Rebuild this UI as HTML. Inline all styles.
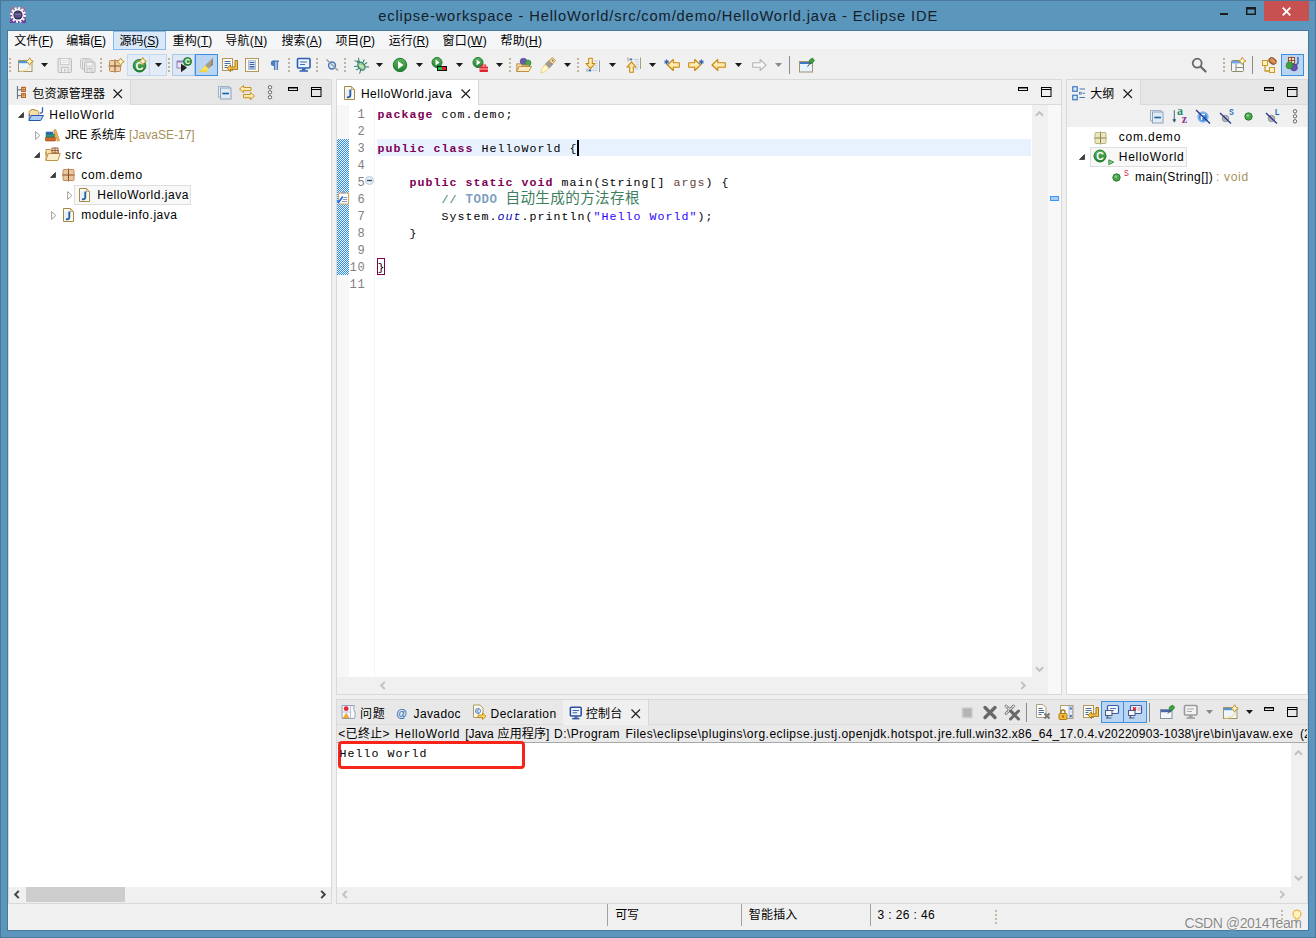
<!DOCTYPE html>
<html lang="zh-CN"><head><meta charset="utf-8"><title>eclipse-workspace - HelloWorld/src/com/demo/HelloWorld.java - Eclipse IDE</title>
<style>
html,body{margin:0;padding:0}
body{width:1316px;height:938px;position:relative;overflow:hidden;background:#5b96bc;font-family:"Liberation Sans","Noto Sans CJK SC",sans-serif;font-size:12px}
div,span.t,svg{position:absolute}
span.t{white-space:pre;line-height:20px;height:20px}
svg{overflow:visible}
u{text-decoration:underline;text-underline-offset:1px}
.k{color:#7f0055;font-weight:bold}.s{color:#2a00ff}.f{color:#0000c0;font-style:italic}.c{color:#3f7f5f}.p{color:#6a3e3e}
.q{color:#a08a55}
</style></head><body>
<svg style="left:0;top:0" width="0" height="0"><defs><linearGradient id="gy" x1="0" y1="0" x2="0" y2="1"><stop offset="0" stop-color="#fffbe6"/><stop offset="1" stop-color="#fbd977"/></linearGradient><linearGradient id="gg" x1="0" y1="0" x2="0" y2="1"><stop offset="0" stop-color="#5fb65f"/><stop offset="1" stop-color="#1f7f2f"/></linearGradient><linearGradient id="gp" x1="0" y1="0" x2="0" y2="1"><stop offset="0" stop-color="#8f83a8"/><stop offset="1" stop-color="#6a3fa2"/></linearGradient></defs></svg>
<div style="left:0px;top:0px;width:1316px;height:938px;box-sizing:border-box;border:1px solid #48799c;"></div>
<div style="left:7px;top:30px;width:1302px;height:901px;background:#48799c;"></div>
<div style="left:8px;top:31px;width:1300px;height:899px;background:#f0f0f0;"></div>
<svg style="left:10px;top:7px" width="16" height="16" viewBox="0 0 16 16"><rect width="16" height="16" fill="url(#gp)"/><circle cx="8" cy="8" r="6.700" fill="none" stroke="#fff" stroke-width="2.400" stroke-dasharray="1.900 1.608"/><circle cx="8" cy="8" r="5.900" fill="#fff"/><circle cx="8" cy="8" r="4.600" fill="#1d1838"/><circle cx="8" cy="8" r="3.700" fill="#4b3f78"/><rect x="4.600" y="6.800" width="6.800" height="1" fill="#8f86b8"/><rect x="4.400" y="8.600" width="7.200" height=".9" fill="#6a5fa0"/></svg>
<div style="left:1264px;top:1px;width:45px;height:20px;background:#c75050;"></div>
<svg style="left:1282.200px;top:6.700px" width="9" height="9"><path d="M.700 .700l7.600 7.600M8.300 .700L.700 8.300" stroke="#fff" stroke-width="1.900"/></svg>
<svg style="left:1246px;top:7px" width="10" height="8"><rect x=".75" y="1.250" width="8.500" height="6" fill="none" stroke="#1c1c1c" stroke-width="1.500"/><rect width="10" height="2.500" fill="#1c1c1c"/></svg>
<div style="left:1220px;top:12.7px;width:8px;height:2.5px;background:#1c1c1c;"></div>
<div style="left:8px;top:31px;width:1300px;height:18px;background:#f5f6f8;"></div>
<div style="left:113px;top:31px;width:53px;height:19px;background:#d9e8f8;box-sizing:border-box;border:1px solid #86b9ec;"></div>
<div style="left:9px;top:58px;width:2px;height:2px;background:#bdb3a2;"></div>
<div style="left:9px;top:62px;width:2px;height:2px;background:#bdb3a2;"></div>
<div style="left:9px;top:66px;width:2px;height:2px;background:#bdb3a2;"></div>
<div style="left:9px;top:70px;width:2px;height:2px;background:#bdb3a2;"></div>
<svg style="left:17px;top:57px" width="16" height="16" viewBox="0 0 16 16"><rect x="1.500" y="3.500" width="13.500" height="11" fill="#eef5fd" stroke="#a79263"/><rect x="2" y="4" width="12.500" height="2.200" fill="#4b96dc"/><path d="M3 14c6 0 9.500-2.500 10.500-7" fill="none" stroke="#f7e4a4" stroke-width="1.300"/><path d="M12.6 0.7l1.3 2.4 2.4 1.3-2.4 1.3-1.3 2.4-1.3-2.4-2.4-1.3 2.4-1.3z" fill="#fff6cc" stroke="#c39a35" stroke-width="1" stroke-linejoin="round"/></svg>
<svg style="left:41px;top:63px" width="7" height="4" viewBox="0 0 7 4"><path d="M0 0h7L3.5 4z" fill="#1a1a1a"/></svg>
<svg style="left:57px;top:57px" width="16" height="16" viewBox="0 0 16 16"><path d="M1 2.500a1 1 0 0 1 1-1h11.500a1 1 0 0 1 1 1v12a1 1 0 0 1-1 1H2a1 1 0 0 1-1-1z" fill="#e6e6e6" stroke="#bcbcbc"/><rect x="3.500" y="1.500" width="8.500" height="6" fill="#f6f6f6" stroke="#c8c8c8" stroke-width=".8"/><path d="M5 3.500h5.500M5 5.500h5.500" stroke="#dadada" stroke-width=".8"/><rect x="4.500" y="10.500" width="6.500" height="5" fill="#efefef" stroke="#bcbcbc" stroke-width=".8"/><rect x="7" y="12" width="1.500" height="2.500" fill="#c4c4c4"/></svg>
<svg style="left:80px;top:57px" width="16" height="16" viewBox="0 0 16 16"><rect x=".500" y="1.500" width="10" height="10" rx="1" fill="#ececec" stroke="#c6c6c6"/><rect x="2.500" y="3" width="10" height="10" rx="1" fill="#ececec" stroke="#c2c2c2"/><rect x="4.500" y="5" width="10.500" height="10.500" rx="1" fill="#e6e6e6" stroke="#bcbcbc"/><rect x="6.500" y="5.500" width="6" height="3.500" fill="#f6f6f6" stroke="#cacaca" stroke-width=".8"/><rect x="7" y="11.500" width="5" height="4" fill="#efefef" stroke="#bcbcbc" stroke-width=".8"/><rect x="9" y="12.500" width="1.300" height="2" fill="#c4c4c4"/></svg>
<div style="left:100px;top:58px;width:2px;height:2px;background:#bdb3a2;"></div>
<div style="left:100px;top:62px;width:2px;height:2px;background:#bdb3a2;"></div>
<div style="left:100px;top:66px;width:2px;height:2px;background:#bdb3a2;"></div>
<div style="left:100px;top:70px;width:2px;height:2px;background:#bdb3a2;"></div>
<svg style="left:108px;top:57px" width="16" height="16" viewBox="0 0 16 16"><rect x="1.5" y="3.5" width="11" height="11" rx="1" fill="#ecd2a4"/><path d="M7.0 2.5v13M0.5 9.0h13" stroke="#8c4a2a" stroke-width="1"/><rect x="1.5" y="3.5" width="11" height="11" rx="1" fill="none" stroke="#c08a5a" stroke-width="1"/><path d="M12.6 1l1.3 2.4 2.4 1.3-2.4 1.3-1.3 2.4-1.3-2.4-2.4-1.3 2.4-1.3z" fill="#fff6cc" stroke="#c39a35" stroke-width="1" stroke-linejoin="round"/></svg>
<div style="left:127px;top:54px;width:40px;height:22px;background:#e3ecf6;box-sizing:border-box;border:1px solid #c4d8ee;"></div>
<div style="left:149px;top:55px;width:1px;height:20px;background:#c4d8ee;"></div>
<svg style="left:131px;top:57px" width="16" height="16" viewBox="0 0 16 16"><circle cx="8.5" cy="8.7" r="6.3" fill="url(#gg)" stroke="#1f7a2a" stroke-width="1"/><text x="8.5" y="12.67" font-family="Liberation Sans,sans-serif" font-weight="bold" font-size="11.03" fill="#fff" text-anchor="middle">C</text><path d="M11.8 0.5l1.3 2.4 2.4 1.3-2.4 1.3-1.3 2.4-1.3-2.4-2.4-1.3 2.4-1.3z" fill="#fff6cc" stroke="#c39a35" stroke-width="1" stroke-linejoin="round"/></svg>
<svg style="left:155px;top:63px" width="7" height="4" viewBox="0 0 7 4"><path d="M0 0h7L3.5 4z" fill="#1a1a1a"/></svg>
<div style="left:168px;top:58px;width:2px;height:2px;background:#bdb3a2;"></div>
<div style="left:168px;top:62px;width:2px;height:2px;background:#bdb3a2;"></div>
<div style="left:168px;top:66px;width:2px;height:2px;background:#bdb3a2;"></div>
<div style="left:168px;top:70px;width:2px;height:2px;background:#bdb3a2;"></div>
<div style="left:172px;top:54px;width:23px;height:22px;background:#dde8f4;box-sizing:border-box;border:1px solid #a9c8ea;"></div>
<svg style="left:176px;top:57px" width="16" height="16" viewBox="0 0 16 16"><rect x="1" y="4.500" width="8" height="6.500" fill="#e9e4f3" stroke="#8d7fb3"/><rect x="1" y="3.500" width="8" height="2" fill="#8d7fb3"/><path d="M5 6.500l6 4.200-6 4.500z" fill="#222"/><circle cx="11.5" cy="4.5" r="4" fill="url(#gg)" stroke="#1f7a2a" stroke-width="1"/><text x="11.5" y="7.02" font-family="Liberation Sans,sans-serif" font-weight="bold" font-size="7.0" fill="#fff" text-anchor="middle">C</text></svg>
<div style="left:195px;top:54px;width:23px;height:22px;background:#b9d5f1;box-sizing:border-box;border:1px solid #3b8ee0;"></div>
<svg style="left:198px;top:57px" width="16" height="16" viewBox="0 0 16 16"><path d="M14.800 .800L7 8.500l3.500 3.300 4.300-4z" fill="#a59d88"/><path d="M14.800 .800l-2.300 8.900 2.300-2z" fill="#857d6c"/><path d="M7 8.500l3.500 3.300-2.300 2.400H4.500l-.5-2.200z" fill="#fbe24f"/><path d="M1.500 14.300h7.500" stroke="#f3d22e" stroke-width="1.500"/></svg>
<svg style="left:221px;top:57px" width="16" height="16" viewBox="0 0 16 16"><rect x="1.5" y="1.5" width="10" height="12" fill="#fdfbf2" stroke="#b09a62"/><path d="M3.5 4.5h6M3.5 6.5h6M3.5 8.5h3M3.5 10.5h3" stroke="#4a6fa8" stroke-width="1"/><path d="M14 3.5v6.5h-4.5v-2.3l-3.3 3.5 3.3 3.5v-2.3h7V3.5z" fill="#f6c545" stroke="#a06f12" stroke-width=".9" stroke-linejoin="round"/></svg>
<svg style="left:244px;top:57px" width="16" height="16" viewBox="0 0 16 16"><rect x="1.5" y="1.5" width="13" height="13" fill="#fdfbf2" stroke="#b09a62"/><rect x="4.5" y="3.5" width="7" height="9" fill="#dbe6f5" stroke="#5577aa" stroke-width=".8" stroke-dasharray="1 1"/><path d="M5.5 5.5h5M5.5 7.5h5M5.5 9.5h5M5.5 11h5" stroke="#3e67a8" stroke-width="1"/></svg>
<svg style="left:267px;top:57px" width="16" height="16" viewBox="0 0 16 16"><path d="M5.8 4.2h6.2M7.7 4v9M10.3 4v9" stroke="#4a7ec0" stroke-width="1.5" fill="none"/><path d="M7.7 3.5h-1.2a2.7 2.7 0 0 0 0 5.4h1.2z" fill="#4a7ec0"/></svg>
<div style="left:288px;top:58px;width:2px;height:2px;background:#bdb3a2;"></div>
<div style="left:288px;top:62px;width:2px;height:2px;background:#bdb3a2;"></div>
<div style="left:288px;top:66px;width:2px;height:2px;background:#bdb3a2;"></div>
<div style="left:288px;top:70px;width:2px;height:2px;background:#bdb3a2;"></div>
<svg style="left:296px;top:57px" width="16" height="16" viewBox="0 0 16 16"><rect x="1.5" y="1.5" width="12.5" height="9.5" rx="1" fill="#eef4fc" stroke="#2d5fae" stroke-width="1.6"/><path d="M4 5h7M4 7.5h5" stroke="#3a6cb8" stroke-width="1.1"/><path d="M6 11.5h3.5v2h-3.5z" fill="#2d5fae"/><path d="M3.5 14h8.5" stroke="#2d5fae" stroke-width="1.5"/></svg>
<div style="left:316px;top:58px;width:2px;height:2px;background:#bdb3a2;"></div>
<div style="left:316px;top:62px;width:2px;height:2px;background:#bdb3a2;"></div>
<div style="left:316px;top:66px;width:2px;height:2px;background:#bdb3a2;"></div>
<div style="left:316px;top:70px;width:2px;height:2px;background:#bdb3a2;"></div>
<svg style="left:325px;top:57px" width="16" height="16" viewBox="0 0 16 16"><circle cx="7" cy="8.5" r="3.4" fill="#dfeaf7" stroke="#3f78bd" stroke-width="1.5"/><path d="M1.5 2.5l11.5 11" stroke="#9a9a9a" stroke-width="1.4"/></svg>
<div style="left:344px;top:58px;width:2px;height:2px;background:#bdb3a2;"></div>
<div style="left:344px;top:62px;width:2px;height:2px;background:#bdb3a2;"></div>
<div style="left:344px;top:66px;width:2px;height:2px;background:#bdb3a2;"></div>
<div style="left:344px;top:70px;width:2px;height:2px;background:#bdb3a2;"></div>
<svg style="left:353px;top:57px" width="16" height="16" viewBox="0 0 16 16"><g transform="rotate(-35 8 8.500)"><ellipse cx="8" cy="9.300" rx="3" ry="4.300" fill="#a9d08a" stroke="#2a7f8c" stroke-width="1.100"/><circle cx="8" cy="4" r="1.700" fill="#3f8f7a"/><path d="M5 7.300L1.800 5.500M4.900 9.500H1.300M5.200 12l-3 2.300M11 7.300l3.200-1.800M11.100 9.500h3.600M10.800 12l3 2.300M6.800 2.700L5.500 .8M9.200 2.700L10.500 .8" stroke="#2f7f6a" stroke-width="1" fill="none"/><path d="M6.700 7.500l2.600 4" stroke="#e6f4da" stroke-width=".9"/></g></svg>
<svg style="left:376px;top:63px" width="7" height="4" viewBox="0 0 7 4"><path d="M0 0h7L3.5 4z" fill="#1a1a1a"/></svg>
<svg style="left:392px;top:57px" width="16" height="16" viewBox="0 0 16 16"><circle cx="8" cy="8" r="6.7" fill="url(#gg)" stroke="#1c7a30" stroke-width="1"/><path d="M6.057 3.9800000000000004L11.484 8L6.057 12.02z" fill="#fff"/></svg>
<svg style="left:416px;top:63px" width="7" height="4" viewBox="0 0 7 4"><path d="M0 0h7L3.5 4z" fill="#1a1a1a"/></svg>
<svg style="left:431px;top:57px" width="16" height="16" viewBox="0 0 16 16"><circle cx="6" cy="5.5" r="5" fill="url(#gg)" stroke="#1c7a30" stroke-width="1"/><path d="M4.55 2.5L8.6 5.5L4.55 8.5z" fill="#fff"/><rect x="6" y="9" width="10" height="5" fill="#111"/><rect x="7" y="10" width="4" height="3" fill="#1fc040"/><rect x="11" y="10" width="4" height="3" fill="#e8242b"/></svg>
<svg style="left:456px;top:63px" width="7" height="4" viewBox="0 0 7 4"><path d="M0 0h7L3.5 4z" fill="#1a1a1a"/></svg>
<svg style="left:472px;top:57px" width="16" height="16" viewBox="0 0 16 16"><circle cx="6" cy="5.5" r="5" fill="url(#gg)" stroke="#1c7a30" stroke-width="1"/><path d="M4.55 2.5L8.6 5.5L4.55 8.5z" fill="#fff"/><rect x="7.500" y="9.500" width="8.500" height="5.500" rx=".8" fill="#e0262c"/><path d="M10 9.500v-1.500h3.500v1.500" fill="none" stroke="#e0262c" stroke-width="1.200"/><path d="M7.500 12h8.500" stroke="#fbd3d3" stroke-width=".9"/></svg>
<svg style="left:496px;top:63px" width="7" height="4" viewBox="0 0 7 4"><path d="M0 0h7L3.5 4z" fill="#1a1a1a"/></svg>
<div style="left:509px;top:58px;width:2px;height:2px;background:#bdb3a2;"></div>
<div style="left:509px;top:62px;width:2px;height:2px;background:#bdb3a2;"></div>
<div style="left:509px;top:66px;width:2px;height:2px;background:#bdb3a2;"></div>
<div style="left:509px;top:70px;width:2px;height:2px;background:#bdb3a2;"></div>
<svg style="left:516px;top:57px" width="16" height="16" viewBox="0 0 16 16"><circle cx="7.5" cy="4.500" r="3.300" fill="#6b58b0" stroke="#4a3a8a" stroke-width=".6"/><circle cx="12" cy="6" r="3" fill="#4fa54f" stroke="#2d7a35" stroke-width=".6"/><path d="M.8 6.800h4l1.200 1.400h6.500v6.300H.8z" fill="#f4d9a0" stroke="#b98a3a" stroke-width=".9"/><path d="M.8 14.500l2.200-5h12.500l-2.700 5z" fill="#fbe9c0" stroke="#b98a3a" stroke-width=".9" stroke-linejoin="round"/></svg>
<svg style="left:540px;top:57px" width="16" height="16" viewBox="0 0 16 16"><path d="M8.500 4l4-3.500 3 3-3.500 4z" fill="#f4d28a" stroke="#b98a3a" stroke-width=".8"/><circle cx="12.600" cy="3.500" r=".8" fill="#3f5f9f"/><path d="M5 7.500l3.500-3.500 4 3.500-3.500 3.700z" fill="#a09c98" stroke="#76726c" stroke-width=".6"/><path d="M5 7.500l4 3.700L4 15l-3.300.8 1-3.300z" fill="#fff8d0" stroke="#e8cc6a" stroke-width=".8"/></svg>
<svg style="left:564px;top:63px" width="7" height="4" viewBox="0 0 7 4"><path d="M0 0h7L3.5 4z" fill="#1a1a1a"/></svg>
<div style="left:577px;top:58px;width:2px;height:2px;background:#bdb3a2;"></div>
<div style="left:577px;top:62px;width:2px;height:2px;background:#bdb3a2;"></div>
<div style="left:577px;top:66px;width:2px;height:2px;background:#bdb3a2;"></div>
<div style="left:577px;top:70px;width:2px;height:2px;background:#bdb3a2;"></div>
<svg style="left:585px;top:57px" width="16" height="16" viewBox="0 0 16 16"><path d="M3.7 1.2h3.600v5.300h2.700l-4.500 5.200-4.500-5.200h2.700z" fill="url(#gy)" stroke="#c8860c" stroke-width="1.100" stroke-linejoin="round"/><path d="M14.500 3.500v11.500M2 11.500v3.500" stroke="#8f9fb0" stroke-width="1"/><path d="M9 4h3.500M10.500 6.300h2M10 8.600h2.500M8 10.900h1.500M10.500 10.900h2M7 13.300h5.500" stroke="#b4c3e0" stroke-width=".9"/><rect x="3.500" y="12.500" width="2.700" height="1.800" fill="#2f5fa8"/></svg>
<svg style="left:609px;top:63px" width="7" height="4" viewBox="0 0 7 4"><path d="M0 0h7L3.5 4z" fill="#1a1a1a"/></svg>
<svg style="left:626px;top:57px" width="16" height="16" viewBox="0 0 16 16"><g transform="translate(0 16.500) scale(1 -1)"><path d="M3.7 1.2h3.600v5.300h2.700l-4.500 5.200-4.500-5.200h2.700z" fill="url(#gy)" stroke="#c8860c" stroke-width="1.100" stroke-linejoin="round"/></g><path d="M14.500 .500v11.500M2 .500v4" stroke="#a8a070" stroke-width="1"/><path d="M8 2.700h4.500M9 5h1.500M11.500 5h1.500M10.500 7.300h2M10.500 9.600h2M9 11.900h3.500" stroke="#b4c3e0" stroke-width=".9"/><rect x="3.500" y="1.500" width="2.700" height="1.800" fill="#4f6fb8"/></svg>
<svg style="left:649px;top:63px" width="7" height="4" viewBox="0 0 7 4"><path d="M0 0h7L3.5 4z" fill="#1a1a1a"/></svg>
<svg style="left:664px;top:57px" width="16" height="16" viewBox="0 0 16 16"><path d="M3.5 8l5.800-5.500v3.200h6v4.600h-6v3.200z" fill="url(#gy)" stroke="#c8860c" stroke-width="1.100" stroke-linejoin="round"/><path d="M2.6 2.500v5M0.5 3.700l4.200 2.600M0.5 6.300l4.200-2.600" stroke="#2f5fa8" stroke-width="1.100"/></svg>
<svg style="left:688px;top:57px" width="16" height="16" viewBox="0 0 16 16"><g transform="translate(16 0) scale(-1 1)"><path d="M3.5 8l5.800-5.500v3.200h6v4.600h-6v3.200z" fill="url(#gy)" stroke="#c8860c" stroke-width="1.100" stroke-linejoin="round"/></g><path d="M13.4 2.500v5M11.3 3.700l4.200 2.600M11.3 6.300l4.200-2.600" stroke="#2f5fa8" stroke-width="1.100"/></svg>
<svg style="left:711px;top:57px" width="16" height="16" viewBox="0 0 16 16"><path d="M1 8l5.800-5.500v3.200h7.5v4.600h-7.5v3.200z" fill="url(#gy)" stroke="#c8860c" stroke-width="1.100" stroke-linejoin="round"/></svg>
<svg style="left:735px;top:63px" width="7" height="4" viewBox="0 0 7 4"><path d="M0 0h7L3.5 4z" fill="#1a1a1a"/></svg>
<svg style="left:751px;top:57px" width="16" height="16" viewBox="0 0 16 16"><g transform="translate(16 0) scale(-1 1)"><path d="M1 8l5.800-5.500v3.200h7.5v4.600h-7.5v3.200z" fill="#f6f6f6" stroke="#b4b4b4" stroke-width="1.100" stroke-linejoin="round"/></g></svg>
<svg style="left:775px;top:63px" width="7" height="4" viewBox="0 0 7 4"><path d="M0 0h7L3.5 4z" fill="#8a8a8a"/></svg>
<div style="left:789px;top:56px;width:1px;height:18px;background:#8a8a8a;"></div>
<svg style="left:798px;top:57px" width="16" height="16" viewBox="0 0 16 16"><rect x="1.500" y="4.500" width="13" height="10.500" fill="#e6f2fc" stroke="#a09468"/><rect x="2" y="5" width="12" height="2" fill="#3f78bd"/><path d="M9.500 9.500l3-3.500" stroke="#444" stroke-width="1"/><path d="M11.500 3l2.800-2 2.200 2.200-2 2.800-2.200.3-1.200-1.200z" fill="#3da13d" stroke="#1f7a2a" stroke-width=".7"/></svg>
<svg style="left:1191px;top:57.3px" width="16" height="16" viewBox="0 0 16.800 16.800"><circle cx="6.500" cy="6.500" r="4.700" fill="none" stroke="#686868" stroke-width="1.900"/><path d="M10 10l5.300 5.300" stroke="#686868" stroke-width="2.300" stroke-linecap="round"/></svg>
<div style="left:1223px;top:58px;width:2px;height:2px;background:#bdb3a2;"></div>
<div style="left:1223px;top:62px;width:2px;height:2px;background:#bdb3a2;"></div>
<div style="left:1223px;top:66px;width:2px;height:2px;background:#bdb3a2;"></div>
<div style="left:1223px;top:70px;width:2px;height:2px;background:#bdb3a2;"></div>
<svg style="left:1230px;top:57px" width="16" height="16" viewBox="0 0 16 16"><rect x="1.500" y="3.500" width="12" height="11" rx="1" fill="#f3f7fc" stroke="#8f8a6a"/><rect x="2" y="4" width="11" height="2.400" fill="#6aa6e6"/><path d="M6 6.500v8M6 10.500h7.500" stroke="#8f8a6a" stroke-width="1"/><path d="M12.3 0.2l1.3 2.4 2.4 1.3-2.4 1.3-1.3 2.4-1.3-2.4-2.4-1.3 2.4-1.3z" fill="#fff6cc" stroke="#c39a35" stroke-width="1" stroke-linejoin="round"/></svg>
<div style="left:1252px;top:56px;width:1px;height:18px;background:#8a8a8a;"></div>
<svg style="left:1261px;top:57px" width="16" height="16" viewBox="0 0 16 16"><path d="M4 7v7h6" fill="none" stroke="#c89a2a" stroke-width="1.300"/><rect x="1.500" y="3.500" width="5" height="5" fill="#fff3b8" stroke="#c89a2a"/><rect x="8.500" y="10.500" width="5" height="5" fill="#fff3b8" stroke="#c89a2a"/><ellipse cx="11.500" cy="4" rx="4" ry="3" transform="rotate(35 11.500 4)" fill="#c4763a" stroke="#7a3f18" stroke-width=".8"/><path d="M9 2.500l5 3.500M10.500 1.200l4 4.500" stroke="#f1c79a" stroke-width=".7"/></svg>
<div style="left:1281px;top:54px;width:23px;height:22px;background:#b9d5f1;box-sizing:border-box;border:1px solid #3b8ee0;"></div>
<svg style="left:1284px;top:56px" width="16" height="16" viewBox="0 0 16 16"><rect x="4.500" y="1.500" width="6" height="6" fill="#f1d9b8" stroke="#8c4a2a" stroke-width=".9"/><path d="M7.500 .800v7.400M3.800 4.500h7.400" stroke="#8c4a2a" stroke-width=".9"/><path d="M14 1v5.500c0 1.500-1 2-2.500 2" fill="none" stroke="#3f6fb0" stroke-width="1.500"/><circle cx="10" cy="11.500" r="3.400" fill="#6b4fb0" stroke="#45308a" stroke-width=".6"/><circle cx="5.500" cy="9.500" r="3.400" fill="#3ea13e" stroke="#1c7a28" stroke-width=".6"/></svg>
<div style="left:8px;top:79px;width:324px;height:825px;background:#fff;box-sizing:border-box;border:1px solid #d9d9d9;"></div>
<div style="left:9px;top:80px;width:322px;height:25px;background:#e6e6e6;box-sizing:border-box;border-bottom:1px solid #dadada;"></div>
<div style="left:9px;top:80px;width:122px;height:25px;background:#f0f0f0;box-sizing:border-box;border-right:1px solid #d8d8d8;"></div>
<svg style="left:16px;top:86px" width="16" height="16" viewBox="0 0 16 16"><path d="M1.400 0v13M1.400 3.800h3.600M1.400 9.700h3.600" stroke="#5a6a84" stroke-width="1" fill="none"/><rect x="5" y=".800" width="5" height="5.100" rx=".5" fill="#b8682a"/><rect x="5" y="7" width="5" height="5.100" rx=".5" fill="#b8682a"/><path d="M6.200 2.500h1.100M7.800 2.500h1.100M6.200 4.200h1.100M7.800 4.200h1.100M6.200 8.700h1.100M7.800 8.700h1.100M6.200 10.400h1.100M7.800 10.400h1.100" stroke="#f2cc98" stroke-width="1.100"/></svg>
<svg style="left:113px;top:89px" width="10" height="10" viewBox="0 0 10 10"><path d="M.5 .5l8.500 8.500M9 .5L.5 9" stroke="#1a1a1a" stroke-width="1.100" fill="none"/></svg>
<svg style="left:218px;top:85px" width="16" height="16" viewBox="0 0 16 16"><rect x=".500" y="1.500" width="10.500" height="10.500" fill="#e8f0f4" stroke="#9fb0c8"/><rect x="2.500" y="3" width="10.500" height="11" fill="#dcecf0" stroke="#8fa0c0"/><path d="M4.300 8.500h6.700" stroke="#1f5fa8" stroke-width="1.600"/></svg>
<svg style="left:239px;top:85px" width="16" height="16" viewBox="0 0 16 16"><path d="M.600 4l4-3.500v2h7.400v3.200H4.600v2z" fill="url(#gy)" stroke="#c8901c" stroke-width="1" stroke-linejoin="round"/><path d="M15.400 11l-4-3.500v2H4.500v3.200h6.900v2z" fill="url(#gy)" stroke="#c8901c" stroke-width="1" stroke-linejoin="round"/></svg>
<svg style="left:267px;top:85px" width="6" height="15" viewBox="0 0 6 15"><circle cx="3" cy="2.300" r="1.700" fill="#fff" stroke="#555" stroke-width=".9"/><circle cx="3" cy="7.300" r="1.700" fill="#fff" stroke="#555" stroke-width=".9"/><circle cx="3" cy="12.300" r="1.700" fill="#fff" stroke="#555" stroke-width=".9"/></svg>
<svg style="left:288px;top:87px" width="11" height="5" viewBox="0 0 11 5"><rect x=".500" y=".500" width="9" height="3" fill="none" stroke="#000" stroke-width="1"/><path d="M.500 1h9" stroke="#000" stroke-width="1"/></svg>
<svg style="left:311px;top:87px" width="11" height="11" viewBox="0 0 11 11"><rect x=".500" y=".500" width="9.500" height="9" fill="none" stroke="#000" stroke-width="1"/><path d="M.500 2.500h9.500" stroke="#000" stroke-width="1"/></svg>
<svg style="left:18px;top:111.5px" width="7" height="7" viewBox="0 0 7 7"><path d="M5.500 .500v5H.500z" fill="#404040" stroke="#262626" stroke-width=".7" stroke-linejoin="round"/></svg>
<svg style="left:28px;top:106px" width="16" height="16" viewBox="0 0 16 16"><path d="M1.200 5.500a1 1 0 0 1 1-1h1.300v-1h3.500v1h2.500l1.200 1.300v3.700h-9.500z" fill="#f4dfa4" stroke="#b98a3a" stroke-width=".9"/><path d="M.800 14.500l2.700-5h12l-2.800 5z" fill="#a9cdf4" stroke="#2a56b0" stroke-width="1" stroke-linejoin="round"/><path d="M1.200 8v6" stroke="#2a56b0" stroke-width=".9"/><path d="M14.500 1.300v4c0 1.400-.9 2-2.700 1.700" fill="none" stroke="#2d5fae" stroke-width="1.300"/></svg>
<svg style="left:35px;top:131px" width="6" height="10" viewBox="0 0 6 10"><path d="M.600 .600l4.300 3.900-4.300 3.900z" fill="#fff" stroke="#a0a0a0" stroke-width="1" stroke-linejoin="round"/></svg>
<svg style="left:45px;top:127px" width="16" height="16" viewBox="0 0 16 16"><rect x=".500" y="10" width="10" height="4" rx=".5" fill="#cc6a2c" stroke="#9a4a18" stroke-width=".6"/><rect x="1" y="7" width="8.500" height="3" rx=".5" fill="#2f9a80" stroke="#1a6a5a" stroke-width=".6"/><rect x="1" y="5" width="7" height="2" rx=".5" fill="#2f6fc0" stroke="#204a90" stroke-width=".5"/><path d="M8.600 3.300l2.100-.7 3.900 10.900-2.200.7z" fill="#f0b44a" stroke="#c07a20" stroke-width=".6"/></svg>
<svg style="left:34px;top:151.8px" width="7" height="7" viewBox="0 0 7 7"><path d="M5.500 .500v5H.500z" fill="#404040" stroke="#262626" stroke-width=".7" stroke-linejoin="round"/></svg>
<svg style="left:45px;top:146px" width="16" height="16" viewBox="0 0 16 16"><path d="M1 3.500h4.500l1.200 1.500h6.800v4H1z" fill="#f6e2a8" stroke="#b98a3a" stroke-width=".9"/><path d="M.8 14.500l2.500-7h12l-2.500 7z" fill="#fbeec8" stroke="#b98a3a" stroke-width=".9" stroke-linejoin="round"/><path d="M1 6v8" stroke="#b98a3a" stroke-width=".9"/><rect x="7" y="2" width="6" height="5" fill="#f1d9b8" stroke="#8c4a2a" stroke-width=".8"/><path d="M10 1.500v6M6.500 4.500h7" stroke="#8c4a2a" stroke-width=".8"/></svg>
<svg style="left:50px;top:171.8px" width="7" height="7" viewBox="0 0 7 7"><path d="M5.500 .500v5H.500z" fill="#404040" stroke="#262626" stroke-width=".7" stroke-linejoin="round"/></svg>
<svg style="left:61px;top:167px" width="16" height="16" viewBox="0 0 16 16"><rect x="2" y="2.5" width="11" height="11" rx="1" fill="#e8c89c"/><path d="M7.5 1.5v13M1 8.0h13" stroke="#8c4a2a" stroke-width="1"/><rect x="2" y="2.5" width="11" height="11" rx="1" fill="none" stroke="#c08a5a" stroke-width="1"/></svg>
<svg style="left:67px;top:191.2px" width="6" height="10" viewBox="0 0 6 10"><path d="M.600 .600l4.300 3.900-4.300 3.900z" fill="#fff" stroke="#a0a0a0" stroke-width="1" stroke-linejoin="round"/></svg>
<div style="left:74px;top:185px;width:117px;height:20px;background:#f8f8f8;box-sizing:border-box;border:1px solid #dedede;"></div>
<svg style="left:77px;top:187px" width="16" height="16" viewBox="0 0 16 16"><path d="M2.500 1.500h7l3 3v10h-10z" fill="#fdfcf4" stroke="#a58a45"/><path d="M9.500 1.500v3h3z" fill="#e8d9a4" stroke="#a58a45" stroke-width=".6"/><rect x="3.300" y="4.500" width="6" height="9" fill="#e6eefa"/><path d="M8.300 4.500v5.800c0 1.600-1 2.300-3.300 1.800" fill="none" stroke="#2a5f9e" stroke-width="1.900"/></svg>
<svg style="left:51px;top:211px" width="6" height="10" viewBox="0 0 6 10"><path d="M.600 .600l4.300 3.900-4.300 3.900z" fill="#fff" stroke="#a0a0a0" stroke-width="1" stroke-linejoin="round"/></svg>
<svg style="left:61px;top:207px" width="16" height="16" viewBox="0 0 16 16"><path d="M2.500 1.500h7l3 3v10h-10z" fill="#fdfcf4" stroke="#a58a45"/><path d="M9.500 1.500v3h3z" fill="#e8d9a4" stroke="#a58a45" stroke-width=".6"/><rect x="3.300" y="4.500" width="6" height="9" fill="#e6eefa"/><path d="M8.300 4.500v5.800c0 1.600-1 2.300-3.300 1.800" fill="none" stroke="#2a5f9e" stroke-width="1.900"/></svg>
<div style="left:9px;top:887px;width:322px;height:16px;background:#f0f0f0;"></div>
<div style="left:26px;top:887px;width:99px;height:15px;background:#cdcdcd;"></div>
<svg style="left:0;top:0" width="1" height="1"><path d="M18.8 890.9L15.2 894.5l3.6 3.6" fill="none" stroke="#444" stroke-width="2"/></svg>
<svg style="left:0;top:0" width="1" height="1"><path d="M321.2 890.9L324.8 894.5l-3.6 3.6" fill="none" stroke="#444" stroke-width="2"/></svg>
<div style="left:336px;top:79px;width:726px;height:616px;background:#fff;box-sizing:border-box;border:1px solid #d9d9d9;"></div>
<div style="left:337px;top:80px;width:724px;height:25px;background:#f0f0f0;box-sizing:border-box;border-bottom:1px solid #dadada;"></div>
<div style="left:337px;top:80px;width:142px;height:25px;background:#fff;box-sizing:border-box;border-right:1px solid #d8d8d8;"></div>
<svg style="left:342px;top:85px" width="16" height="16" viewBox="0 0 16 16"><path d="M2.500 1.500h7l3 3v10h-10z" fill="#fdfcf4" stroke="#a58a45"/><path d="M9.500 1.500v3h3z" fill="#e8d9a4" stroke="#a58a45" stroke-width=".6"/><rect x="3.300" y="4.500" width="6" height="9" fill="#e6eefa"/><path d="M8.300 4.500v5.800c0 1.600-1 2.300-3.300 1.800" fill="none" stroke="#2a5f9e" stroke-width="1.900"/></svg>
<svg style="left:461px;top:89px" width="10" height="10" viewBox="0 0 10 10"><path d="M.5 .5l8.500 8.500M9 .5L.5 9" stroke="#1a1a1a" stroke-width="1.100" fill="none"/></svg>
<svg style="left:1018px;top:87px" width="11" height="5" viewBox="0 0 11 5"><rect x=".500" y=".500" width="9" height="3" fill="none" stroke="#000" stroke-width="1"/><path d="M.500 1h9" stroke="#000" stroke-width="1"/></svg>
<svg style="left:1041px;top:87px" width="11" height="11" viewBox="0 0 11 11"><rect x=".500" y=".500" width="9.500" height="9" fill="none" stroke="#000" stroke-width="1"/><path d="M.500 2.500h9.500" stroke="#000" stroke-width="1"/></svg>
<div style="left:337px;top:105px;width:12px;height:572px;background:#f7f7f7;"></div>
<div style="left:337px;top:139px;width:12px;height:136px;background:repeating-conic-gradient(#2a8cf0 0 25%,#f4f9ff 0 50%) 0 0/2px 2px;"></div>
<div style="left:374px;top:105px;width:1px;height:572px;background:#f6f6f6;"></div>
<div style="left:377px;top:139px;width:654px;height:17px;background:#e8f2fe;"></div>
<div style="left:1032px;top:105px;width:16px;height:572px;background:#f0f0f0;"></div>
<div style="left:1048px;top:105px;width:13px;height:589px;background:#f8f8f8;"></div>
<div style="left:1050px;top:196px;width:9px;height:5px;background:#a9cdf2;box-sizing:border-box;border:1px solid #3399ff;"></div>
<svg style="left:0;top:0" width="1" height="1"><path d="M1035.9 115.8L1039.5 112.2l3.6 3.6" fill="none" stroke="#c2c2c2" stroke-width="2"/></svg>
<svg style="left:0;top:0" width="1" height="1"><path d="M1035.9 667.2L1039.5 670.8l3.6-3.6" fill="none" stroke="#c2c2c2" stroke-width="2"/></svg>
<div style="left:337px;top:677px;width:711px;height:17px;background:#f0f0f0;"></div>
<svg style="left:0;top:0" width="1" height="1"><path d="M384.8 681.9L381.2 685.5l3.6 3.6" fill="none" stroke="#c2c2c2" stroke-width="2"/></svg>
<svg style="left:0;top:0" width="1" height="1"><path d="M1021.2 681.9L1024.8 685.5l-3.6 3.6" fill="none" stroke="#c2c2c2" stroke-width="2"/></svg>
<svg style="left:365px;top:176px" width="9" height="9"><circle cx="4.500" cy="4.500" r="4" fill="#e6edf5" stroke="#b4c3d6" stroke-width=".9"/><path d="M2 4.500h5" stroke="#3a4868" stroke-width="1.300"/></svg>
<svg style="left:337px;top:190px" width="12" height="15" viewBox="0 0 12 15"><rect x="1.500" y="3" width="10" height="11" rx=".8" fill="#fdfdfd" stroke="#c8a868" stroke-width="1.200"/><path d="M3.500 3.500L6.500 .300l3 3.200z" fill="#98a6c6"/><path d="M6.500 7.500h3.500M6 9.500h4M5 11.500h5" stroke="#7a8cb0" stroke-width=".9"/><path d="M.300 10.500l1.500 1.600 4-5.600" fill="none" stroke="#1f6ff0" stroke-width="1.700"/></svg>
<div style="left:377px;top:258px;width:8px;height:17px;box-sizing:border-box;border:1px solid #7f0055;"></div>
<div style="left:577px;top:140px;width:2px;height:16px;background:#000;"></div>
<div style="left:1066px;top:79px;width:242px;height:616px;background:#fff;box-sizing:border-box;border:1px solid #d9d9d9;"></div>
<div style="left:1067px;top:80px;width:240px;height:25px;background:#e6e6e6;box-sizing:border-box;border-bottom:1px solid #dadada;"></div>
<div style="left:1067px;top:80px;width:74px;height:25px;background:#f0f0f0;box-sizing:border-box;border-right:1px solid #d8d8d8;"></div>
<div style="left:1067px;top:105px;width:240px;height:22px;background:#f0f0f0;"></div>
<svg style="left:1072px;top:86px" width="14" height="15" viewBox="0 0 14 15"><rect x=".750" y=".750" width="4.500" height="4.500" fill="#dce9f8" stroke="#3f78bd" stroke-width="1.200"/><rect x=".750" y="9.250" width="4.500" height="4.500" fill="#dce9f8" stroke="#3f78bd" stroke-width="1.200"/><path d="M7.500 3h5.500M7.500 11.500h5.500M10.500 7.200h2.500" stroke="#3f78bd" stroke-width="1.100"/><rect x="7.500" y="6.300" width="1.800" height="1.800" fill="none" stroke="#3f78bd" stroke-width=".8"/></svg>
<svg style="left:1123px;top:89px" width="10" height="10" viewBox="0 0 10 10"><path d="M.5 .5l8.500 8.500M9 .5L.5 9" stroke="#1a1a1a" stroke-width="1.100" fill="none"/></svg>
<svg style="left:1264px;top:87px" width="11" height="5" viewBox="0 0 11 5"><rect x=".500" y=".500" width="9" height="3" fill="none" stroke="#000" stroke-width="1"/><path d="M.500 1h9" stroke="#000" stroke-width="1"/></svg>
<svg style="left:1287px;top:87px" width="11" height="11" viewBox="0 0 11 11"><rect x=".500" y=".500" width="9.500" height="9" fill="none" stroke="#000" stroke-width="1"/><path d="M.500 2.500h9.500" stroke="#000" stroke-width="1"/></svg>
<svg style="left:1150px;top:109px" width="16" height="16" viewBox="0 0 16 16"><rect x=".500" y="1.500" width="10.500" height="10.500" fill="#e8f0f4" stroke="#9fb0c8"/><rect x="2.500" y="3" width="10.500" height="11" fill="#dcecf0" stroke="#8fa0c0"/><path d="M4.300 8.500h6.700" stroke="#1f5fa8" stroke-width="1.600"/></svg>
<svg style="left:1172px;top:109px" width="16" height="16" viewBox="0 0 16 16"><path d="M2.300 1.200v10" fill="none" stroke="#4a6484" stroke-width="1"/><path d="M.300 10.300h4l-2 3.500z" fill="#3a5474"/></svg>
<svg style="left:1195px;top:109px" width="16" height="16" viewBox="0 0 16 16"><circle cx="8" cy="8" r="5" fill="#3f8fe0" stroke="#8ab8ea" stroke-width="1.500"/><path d="M6.500 11V5.500h3.500M6.500 8h2.500" stroke="#fff" stroke-width="1.300" fill="none"/><path d="M1 1l14 13.500" stroke="#24348a" stroke-width="1.300"/></svg>
<svg style="left:1219px;top:109px" width="16" height="16" viewBox="0 0 16 16"><circle cx="6.500" cy="9.500" r="3.300" fill="#b4b4b4" stroke="#8a8a8a" stroke-width=".8"/><path d="M1 4l11 10.500" stroke="#24348a" stroke-width="1.300"/></svg>
<svg style="left:1244px;top:112px" width="9" height="9" viewBox="0 0 9 9"><circle cx="4.500" cy="4.500" r="3.700" fill="#4aa84a" stroke="#2a7a32" stroke-width="1"/><circle cx="3.800" cy="3.600" r="1.300" fill="#8fd08f"/></svg>
<svg style="left:1265px;top:109px" width="16" height="16" viewBox="0 0 16 16"><circle cx="6.500" cy="9.500" r="3.300" fill="#b4b4b4" stroke="#8a8a8a" stroke-width=".8"/><path d="M1 4l11 10.500" stroke="#24348a" stroke-width="1.300"/></svg>
<svg style="left:1292px;top:109px" width="6" height="15" viewBox="0 0 6 15"><circle cx="3" cy="2.300" r="1.700" fill="#fff" stroke="#555" stroke-width=".9"/><circle cx="3" cy="7.300" r="1.700" fill="#fff" stroke="#555" stroke-width=".9"/><circle cx="3" cy="12.300" r="1.700" fill="#fff" stroke="#555" stroke-width=".9"/></svg>
<svg style="left:1093px;top:130px" width="16" height="16" viewBox="0 0 16 16"><rect x="2" y="2.5" width="11" height="11" rx="1" fill="#ebe7c0"/><path d="M7.5 1.5v13M1 8.0h13" stroke="#8a8650" stroke-width="1"/><rect x="2" y="2.5" width="11" height="11" rx="1" fill="none" stroke="#b8b480" stroke-width="1"/></svg>
<svg style="left:1079px;top:154.3px" width="7" height="7" viewBox="0 0 7 7"><path d="M5.500 .500v5H.500z" fill="#404040" stroke="#262626" stroke-width=".7" stroke-linejoin="round"/></svg>
<div style="left:1090px;top:147px;width:97px;height:20px;background:#f8f8f8;box-sizing:border-box;border:1px solid #dedede;"></div>
<svg style="left:1092.5px;top:148.5px" width="22" height="16" viewBox="0 0 22 16"><circle cx="7" cy="7" r="6" fill="url(#gg)" stroke="#1f7a2a" stroke-width="1"/><text x="7" y="10.78" font-family="Liberation Sans,sans-serif" font-weight="bold" font-size="10.5" fill="#fff" text-anchor="middle">C</text><path d="M15.800 10.800l5 2.400-5 2.400z" fill="#7fce8a" stroke="#2a8a3a" stroke-width=".9" stroke-linejoin="round"/></svg>
<svg style="left:1111.5px;top:173.2px" width="9" height="9" viewBox="0 0 9 9"><circle cx="4.500" cy="4.500" r="3.700" fill="#4aa84a" stroke="#2a7a32" stroke-width="1"/><circle cx="3.800" cy="3.600" r="1.300" fill="#8fd08f"/></svg>
<div style="left:336px;top:699px;width:972px;height:205px;background:#fff;box-sizing:border-box;border:1px solid #d9d9d9;"></div>
<div style="left:337px;top:700px;width:970px;height:25px;background:#e8e8e8;box-sizing:border-box;border-bottom:1px solid #dadada;"></div>
<div style="left:563px;top:700px;width:86px;height:25px;background:#f0f0f0;box-sizing:border-box;border-right:1px solid #d8d8d8;"></div>
<svg style="left:341px;top:704px" width="16" height="16" viewBox="0 0 16 16"><path d="M1 1.500h12.500c-1 2-1 3.500 0 5.500s1 5 0 7.500H1z" fill="#f6f8fc" stroke="#8a98b4" stroke-width=".9"/><path d="M9.500 1.500v13M1 8h8.500" stroke="#a8b4cc" stroke-width=".8"/><circle cx="5.200" cy="4.700" r="2.400" fill="#e02a30"/><path d="M5.200 9.300l2.800 4.700H2.400z" fill="#f8b02a" stroke="#e08a10" stroke-width=".6"/></svg>
<svg style="left:471px;top:704px" width="16" height="16" viewBox="0 0 16 16"><path d="M2.500 1h6.500l3 3v9.500h-9.500z" fill="#fdfbf0" stroke="#b09a62"/><circle cx="7" cy="7" r="2.600" fill="#e4ecf8" stroke="#3f78bd" stroke-width=".8"/><path d="M8 6a1.300 1.300 0 1 0 0 2" fill="none" stroke="#3f78bd" stroke-width=".8"/><path d="M7 11h4.500V9l3.500 3.300-3.500 3.300v-2H7z" fill="#fbd55a" stroke="#b97d10" stroke-width=".8" stroke-linejoin="round"/></svg>
<svg style="left:568.5px;top:705.5px" width="14" height="14" viewBox="0 0 15.500 15.500"><rect x="1.500" y="1.500" width="12" height="9.500" rx="1" fill="#eef4fc" stroke="#2d4f9e" stroke-width="1.700"/><path d="M4 5h7M4 7.500h5" stroke="#3a5cb0" stroke-width="1.100"/><path d="M6 11.500h3.500v1.500h-3.500z" fill="#2d4f9e"/><path d="M3.500 14h8" stroke="#2d4f9e" stroke-width="1.600"/></svg>
<svg style="left:631px;top:709px" width="10" height="10" viewBox="0 0 10 10"><path d="M.5 .5l8.500 8.500M9 .5L.5 9" stroke="#1a1a1a" stroke-width="1.100" fill="none"/></svg>
<svg style="left:959px;top:704px" width="16" height="16" viewBox="0 0 16 16"><rect x="3" y="3.500" width="10.500" height="10.500" rx="1.500" fill="#c2c2c2" stroke="#d6d6d6" stroke-width="1.200"/><rect x="4.500" y="5" width="7.500" height="7.500" fill="#b4b4b4"/></svg>
<svg style="left:982px;top:704px" width="16" height="16" viewBox="0 0 16 16"><path d="M3 3.500l10 10M13 3.500l-10 10" stroke="#686868" stroke-width="3.400" stroke-linecap="round"/></svg>
<svg style="left:1004px;top:704px" width="16" height="16" viewBox="0 0 16 16"><path d="M2 2l7.500 7.500M9.500 2L2 9.500" stroke="#777" stroke-width="2.800" stroke-linecap="round"/><path d="M2 2l7.500 7.500M9.500 2L2 9.500" stroke="#f0f0f0" stroke-width="1.200" stroke-linecap="round" stroke-dasharray="1.500 1.500"/><path d="M6.500 7l8 8M14.500 7l-8 8" stroke="#686868" stroke-width="3" stroke-linecap="round"/></svg>
<div style="left:1026px;top:703px;width:1px;height:19px;background:#8a8a8a;"></div>
<svg style="left:1035px;top:704px" width="16" height="16" viewBox="0 0 16 16"><path d="M1.500 .500h6.500l3 3v10h-9.500z" fill="#fdfbf0" stroke="#a8a08a"/><path d="M3.500 4.500h4M3.500 6.500h5.500M3.500 8.500h5.500M3.500 10.500h3" stroke="#4a6fa8" stroke-width="1"/><path d="M9.500 9.500l5 5M14.500 9.500l-5 5" stroke="#7a7a7a" stroke-width="2.200"/></svg>
<svg style="left:1058px;top:704px" width="16" height="16" viewBox="0 0 16 16"><rect x="2.500" y="1.500" width="12.500" height="13" fill="#f4f8fc" stroke="#b0a070"/><rect x="11" y="2" width="3.500" height="12" fill="#dfe8f4" stroke="#8a9ab8" stroke-width=".6"/><rect x="11.800" y="3.500" width="2" height="2" fill="#4a6ab0"/><rect x="11.800" y="11" width="2" height="2" fill="#4a6ab0"/><rect x="1" y="9.500" width="8" height="6" rx="1" fill="#f3b83a" stroke="#a87410" stroke-width=".9"/><path d="M3 9.500V8a2 2 0 0 1 4 0v1.500" fill="none" stroke="#a87410" stroke-width="1.300"/><rect x="4.300" y="11.500" width="1.400" height="2" fill="#7a5208"/></svg>
<svg style="left:1082px;top:704px" width="16" height="16" viewBox="0 0 16 16"><rect x="1.5" y="1.5" width="10" height="12" fill="#fdfbf2" stroke="#b09a62"/><path d="M3.5 4.5h6M3.5 6.5h6M3.5 8.5h3M3.5 10.5h3" stroke="#4a6fa8" stroke-width="1"/><path d="M14 3.5v6.5h-4.5v-2.3l-3.3 3.5 3.3 3.5v-2.3h7V3.5z" fill="#f6c545" stroke="#a06f12" stroke-width=".9" stroke-linejoin="round"/></svg>
<div style="left:1101px;top:701px;width:23px;height:22px;background:#b9d5f1;box-sizing:border-box;border:1px solid #3b8ee0;"></div>
<div style="left:1124px;top:701px;width:23px;height:22px;background:#b9d5f1;box-sizing:border-box;border:1px solid #3b8ee0;border-left:0;"></div>
<svg style="left:1104px;top:704px" width="16" height="16" viewBox="0 0 16 16"><rect x="3.500" y="1.500" width="11" height="8" rx="1" fill="#f4f8fc" stroke="#3a5cb0" stroke-width="1.200"/><path d="M6 4.500h6M6 6.500h4" stroke="#5a7ab8" stroke-width="1"/><rect x="1.500" y="6.500" width="6.500" height="5" fill="#f4f8fc" stroke="#4a5a80" stroke-width="1"/><path d="M3.500 12v1.500M2 14h5.500" stroke="#4a5a80" stroke-width="1.200"/></svg>
<svg style="left:1127px;top:704px" width="16" height="16" viewBox="0 0 16 16"><rect x="3.500" y="1.500" width="11" height="8" rx="1" fill="#f4f8fc" stroke="#3a5cb0" stroke-width="1.200"/><path d="M6 3.300l3 3M9 3.300l-3 3" stroke="#d8242a" stroke-width="1.500"/><path d="M10.500 4h3M10.500 6h3" stroke="#c88" stroke-width="1"/><rect x="1.500" y="6.500" width="6.500" height="5" fill="#f4f8fc" stroke="#4a5a80" stroke-width="1"/><path d="M3.500 12v1.500M2 14h5.500" stroke="#4a5a80" stroke-width="1.200"/></svg>
<div style="left:1149px;top:703px;width:1px;height:19px;background:#8a8a8a;"></div>
<svg style="left:1159px;top:704px" width="16" height="16" viewBox="0 0 16 16"><rect x="1.500" y="5.500" width="11.500" height="9" fill="#f3f7fc" stroke="#8a8f9a"/><rect x="2" y="6" width="10.500" height="2.200" fill="#3f68b0"/><path d="M9 9.500l3-3.500" stroke="#444" stroke-width="1"/><path d="M10.500 3l3-2 2.200 2.200-2 3-2.200.3-1.300-1.300z" fill="#3da13d" stroke="#1f7a2a" stroke-width=".7"/></svg>
<svg style="left:1183px;top:704px" width="16" height="16" viewBox="0 0 16 16"><rect x="1.5" y="1.5" width="12.5" height="9.5" rx="1" fill="#f3f3f3" stroke="#9a9a9a" stroke-width="1.6"/><path d="M4 5h7M4 7.5h5" stroke="#a8a8a8" stroke-width="1.1"/><path d="M6 11.5h3.5v2h-3.5z" fill="#9a9a9a"/><path d="M3.5 14h8.5" stroke="#9a9a9a" stroke-width="1.5"/></svg>
<svg style="left:1206px;top:710px" width="7" height="4" viewBox="0 0 7 4"><path d="M0 0h7L3.5 4z" fill="#8a8a8a"/></svg>
<svg style="left:1222px;top:704px" width="16" height="16" viewBox="0 0 16 16"><rect x="1.500" y="3.500" width="13.500" height="11" fill="#eef5fd" stroke="#a79263"/><rect x="2" y="4" width="12.500" height="2.200" fill="#4b96dc"/><path d="M3 14c6 0 9.500-2.500 10.500-7" fill="none" stroke="#f7e4a4" stroke-width="1.300"/><path d="M12.6 0.7l1.3 2.4 2.4 1.3-2.4 1.3-1.3 2.4-1.3-2.4-2.4-1.3 2.4-1.3z" fill="#fff6cc" stroke="#c39a35" stroke-width="1" stroke-linejoin="round"/></svg>
<svg style="left:1246px;top:710px" width="7" height="4" viewBox="0 0 7 4"><path d="M0 0h7L3.5 4z" fill="#1a1a1a"/></svg>
<svg style="left:1264px;top:707px" width="11" height="5" viewBox="0 0 11 5"><rect x=".500" y=".500" width="9" height="3" fill="none" stroke="#000" stroke-width="1"/><path d="M.500 1h9" stroke="#000" stroke-width="1"/></svg>
<svg style="left:1287px;top:707px" width="11" height="11" viewBox="0 0 11 11"><rect x=".500" y=".500" width="9.500" height="9" fill="none" stroke="#000" stroke-width="1"/><path d="M.500 2.500h9.500" stroke="#000" stroke-width="1"/></svg>
<div style="left:337px;top:725px;width:970px;height:17px;background:#e9e9e9;"></div>
<div style="left:337px;top:742px;width:970px;height:1px;background:#a8a8a8;"></div>
<div style="left:338px;top:741px;width:187px;height:28px;box-sizing:border-box;border:3px solid #f8241a;border-radius:4px;"></div>
<div style="left:1291px;top:743px;width:16px;height:144px;background:#f0f0f0;"></div>
<svg style="left:0;top:0" width="1" height="1"><path d="M1294.9 754.8L1298.5 751.2l3.6 3.6" fill="none" stroke="#c2c2c2" stroke-width="2"/></svg>
<svg style="left:0;top:0" width="1" height="1"><path d="M1294.9 876.2L1298.5 879.8l3.6-3.6" fill="none" stroke="#c2c2c2" stroke-width="2"/></svg>
<div style="left:337px;top:887px;width:970px;height:16px;background:#f0f0f0;"></div>
<svg style="left:0;top:0" width="1" height="1"><path d="M346.8 890.9L343.2 894.5l3.6 3.6" fill="none" stroke="#c2c2c2" stroke-width="2"/></svg>
<svg style="left:0;top:0" width="1" height="1"><path d="M1280.2 890.9L1283.8 894.5l-3.6 3.6" fill="none" stroke="#c2c2c2" stroke-width="2"/></svg>
<div style="left:607px;top:904px;width:1px;height:22px;background:#a0a0a0;"></div>
<div style="left:741px;top:904px;width:1px;height:22px;background:#a0a0a0;"></div>
<div style="left:870px;top:904px;width:1px;height:22px;background:#a0a0a0;"></div>
<div style="left:995px;top:910px;width:2px;height:2px;background:#c4baa6;"></div>
<div style="left:995px;top:914px;width:2px;height:2px;background:#c4baa6;"></div>
<div style="left:995px;top:918px;width:2px;height:2px;background:#c4baa6;"></div>
<div style="left:995px;top:922px;width:2px;height:2px;background:#c4baa6;"></div>
<div style="left:1281px;top:910px;width:2px;height:2px;background:#c4baa6;"></div>
<div style="left:1281px;top:914px;width:2px;height:2px;background:#c4baa6;"></div>
<div style="left:1281px;top:918px;width:2px;height:2px;background:#c4baa6;"></div>
<div style="left:1281px;top:922px;width:2px;height:2px;background:#c4baa6;"></div>
<svg style="left:1292px;top:909px" width="10" height="15" viewBox="0 0 10 15"><path d="M5 1a4 4 0 0 1 2.300 7.300c-.5.500-.6 1-.6 1.700H3.300c0-.700-.100-1.200-.600-1.700A4 4 0 0 1 5 1z" fill="#fff3c0" stroke="#f0a020" stroke-width="1"/><path d="M3.500 11.500h3M3.800 13h2.400" stroke="#44506a" stroke-width="1.200"/></svg>
<span class="t" style="left:378.2px;top:5.5px;font-size:14.67px;color:#14202a;letter-spacing:0.871px;">eclipse-workspace - HelloWorld/src/com/demo/HelloWorld.java - Eclipse IDE</span>
<span class="t" style="left:14.3px;top:31.0px;font-size:12px;color:#000;letter-spacing:-0.089px;">文件(<u>F</u>)</span>
<span class="t" style="left:66.3px;top:31.0px;font-size:12px;color:#000;letter-spacing:-0.063px;">编辑(<u>E</u>)</span>
<span class="t" style="left:119.5px;top:31.0px;font-size:12px;color:#000;letter-spacing:-0.103px;">源码(<u>S</u>)</span>
<span class="t" style="left:172.5px;top:31.0px;font-size:12px;color:#000;letter-spacing:0.131px;">重构(<u>T</u>)</span>
<span class="t" style="left:225.2px;top:31.0px;font-size:12px;color:#000;letter-spacing:0.326px;">导航(<u>N</u>)</span>
<span class="t" style="left:281.5px;top:31.0px;font-size:12px;color:#000;letter-spacing:0.097px;">搜索(<u>A</u>)</span>
<span class="t" style="left:335.5px;top:31.0px;font-size:12px;color:#000;letter-spacing:-0.143px;">项目(<u>P</u>)</span>
<span class="t" style="left:388.8px;top:31.0px;font-size:12px;color:#000;letter-spacing:-0.094px;">运行(<u>R</u>)</span>
<span class="t" style="left:442.5px;top:31.0px;font-size:12px;color:#000;letter-spacing:0.194px;">窗口(<u>W</u>)</span>
<span class="t" style="left:500.5px;top:31.0px;font-size:12px;color:#000;letter-spacing:0.186px;">帮助(<u>H</u>)</span>
<span class="t" style="left:32.3px;top:84.0px;font-size:12px;color:#000;letter-spacing:0.131px;">包资源管理器</span>
<span class="t" style="left:49.3px;top:104.7px;font-size:12px;color:#000;letter-spacing:0.713px;">HelloWorld</span>
<span class="t" style="left:64.9px;top:125.0px;font-size:12px;color:#000;letter-spacing:-0.202px;">JRE 系统库</span>
<span class="t" style="left:129.1px;top:125.0px;font-size:12px;color:#a6905a;letter-spacing:0.020px;">[JavaSE-17]</span>
<span class="t" style="left:64.9px;top:144.7px;font-size:12px;color:#000;letter-spacing:0.600px;">src</span>
<span class="t" style="left:81.2px;top:164.8px;font-size:12px;color:#000;letter-spacing:0.721px;">com.demo</span>
<span class="t" style="left:97.2px;top:184.5px;font-size:12px;color:#000;letter-spacing:0.532px;">HelloWorld.java</span>
<span class="t" style="left:81.2px;top:205.2px;font-size:12px;color:#000;letter-spacing:0.515px;">module-info.java</span>
<span class="t" style="left:360.9px;top:84.0px;font-size:12px;color:#000;letter-spacing:0.519px;">HelloWorld.java</span>
<span class="t" style="left:357.5px;top:105.0px;font-size:12px;color:#808080;font-family:'Liberation Mono','Noto Sans CJK SC',monospace;letter-spacing:0.8px;">1</span>
<span class="t" style="left:357.5px;top:122.0px;font-size:12px;color:#808080;font-family:'Liberation Mono','Noto Sans CJK SC',monospace;letter-spacing:0.8px;">2</span>
<span class="t" style="left:357.5px;top:139.0px;font-size:12px;color:#808080;font-family:'Liberation Mono','Noto Sans CJK SC',monospace;letter-spacing:0.8px;">3</span>
<span class="t" style="left:357.5px;top:156.0px;font-size:12px;color:#808080;font-family:'Liberation Mono','Noto Sans CJK SC',monospace;letter-spacing:0.8px;">4</span>
<span class="t" style="left:357.5px;top:173.0px;font-size:12px;color:#808080;font-family:'Liberation Mono','Noto Sans CJK SC',monospace;letter-spacing:0.8px;">5</span>
<span class="t" style="left:357.5px;top:190.0px;font-size:12px;color:#808080;font-family:'Liberation Mono','Noto Sans CJK SC',monospace;letter-spacing:0.8px;">6</span>
<span class="t" style="left:357.5px;top:207.0px;font-size:12px;color:#808080;font-family:'Liberation Mono','Noto Sans CJK SC',monospace;letter-spacing:0.8px;">7</span>
<span class="t" style="left:357.5px;top:224.0px;font-size:12px;color:#808080;font-family:'Liberation Mono','Noto Sans CJK SC',monospace;letter-spacing:0.8px;">8</span>
<span class="t" style="left:357.5px;top:241.0px;font-size:12px;color:#808080;font-family:'Liberation Mono','Noto Sans CJK SC',monospace;letter-spacing:0.8px;">9</span>
<span class="t" style="left:349.5px;top:258.0px;font-size:12px;color:#808080;font-family:'Liberation Mono','Noto Sans CJK SC',monospace;letter-spacing:0.8px;">10</span>
<span class="t" style="left:349.5px;top:275.0px;font-size:12px;color:#808080;font-family:'Liberation Mono','Noto Sans CJK SC',monospace;letter-spacing:0.8px;">11</span>
<span class="t" style="left:377.5px;top:104.5px;font-size:11.6px;color:#000;font-family:'Liberation Mono','Noto Sans CJK SC',monospace;letter-spacing:1.04px;"><span class="k">package</span> com.demo;</span>
<span class="t" style="left:377.5px;top:138.5px;font-size:11.6px;color:#000;font-family:'Liberation Mono','Noto Sans CJK SC',monospace;letter-spacing:1.04px;"><span class="k">public</span> <span class="k">class</span> HelloWorld {</span>
<span class="t" style="left:377.5px;top:172.5px;font-size:11.6px;color:#000;font-family:'Liberation Mono','Noto Sans CJK SC',monospace;letter-spacing:1.04px;">    <span class="k">public</span> <span class="k">static</span> <span class="k">void</span> main(String[] <span class="p">args</span>) {</span>
<span class="t" style="left:377.5px;top:189.5px;font-size:11.6px;color:#000;font-family:'Liberation Mono','Noto Sans CJK SC',monospace;letter-spacing:1.04px;">        <span class="c">// </span><span style="color:#7f9fbf;font-weight:bold;font-size:12.4px;letter-spacing:.56px">TODO</span><span class="c"> </span></span>
<span class="t" style="left:377.5px;top:206.5px;font-size:11.6px;color:#000;font-family:'Liberation Mono','Noto Sans CJK SC',monospace;letter-spacing:1.04px;">        System.<span class="f">out</span>.println(<span class="s">"Hello World"</span>);</span>
<span class="t" style="left:377.5px;top:223.5px;font-size:11.6px;color:#000;font-family:'Liberation Mono','Noto Sans CJK SC',monospace;letter-spacing:1.04px;">    }</span>
<span class="t" style="left:377.5px;top:257.5px;font-size:11.6px;color:#000;font-family:'Liberation Mono','Noto Sans CJK SC',monospace;letter-spacing:1.04px;">}</span>
<span class="t" style="left:505.5px;top:188.0px;font-size:14.6px;color:#3f7f5f;letter-spacing:0.338px;">自动生成的方法存根</span>
<span class="t" style="left:1090.2px;top:84.0px;font-size:12px;color:#000;letter-spacing:0.142px;">大纲</span>
<span class="t" style="left:1177.0px;top:101.4px;font-size:12px;color:#1f8a6a;font-family:'Liberation Serif',serif;font-weight:bold;">a</span>
<span class="t" style="left:1181.8px;top:109.4px;font-size:12px;color:#8f3a9a;font-family:'Liberation Serif',serif;font-weight:bold;">z</span>
<span class="t" style="left:1228.8px;top:102.0px;font-size:9px;color:#1f6fb0;font-weight:bold;transform:scaleX(.8);transform-origin:0 0;">S</span>
<span class="t" style="left:1274.8px;top:102.0px;font-size:9px;color:#1f5fb0;font-weight:bold;transform:scaleX(.8);transform-origin:0 0;">L</span>
<span class="t" style="left:1118.8px;top:126.6px;font-size:12px;color:#000;letter-spacing:0.784px;">com.demo</span>
<span class="t" style="left:1118.8px;top:146.6px;font-size:12px;color:#000;letter-spacing:0.723px;">HelloWorld</span>
<span class="t" style="left:1124.3px;top:162.7px;font-size:8.5px;color:#cc1840;transform:scaleX(.85);transform-origin:0 0;">S</span>
<span class="t" style="left:1135.0px;top:166.7px;font-size:12px;color:#000;letter-spacing:0.441px;">main(String[])</span>
<span class="t" style="left:1216.0px;top:166.7px;font-size:12px;color:#a6905a;letter-spacing:0.685px;">: void</span>
<span class="t" style="left:360.1px;top:704.0px;font-size:12px;color:#000;letter-spacing:0.542px;">问题</span>
<span class="t" style="left:395.9px;top:703.0px;font-size:11px;color:#2f6fb8;letter-spacing:0.366px;font-weight:bold;font-style:italic;">@</span>
<span class="t" style="left:413.5px;top:704.0px;font-size:12px;color:#000;letter-spacing:0.385px;">Javadoc</span>
<span class="t" style="left:490.5px;top:704.0px;font-size:12px;color:#000;letter-spacing:0.500px;">Declaration</span>
<span class="t" style="left:585.8px;top:704.0px;font-size:12px;color:#000;letter-spacing:0.228px;">控制台</span>
<span class="t" style="left:338.3px;top:724.0px;font-size:12px;color:#000;letter-spacing:0.314px;">&lt;已终止&gt;</span>
<span class="t" style="left:395.0px;top:724.0px;font-size:12px;color:#000;letter-spacing:0.663px;">HelloWorld</span>
<span class="t" style="left:465.3px;top:724.0px;font-size:12px;color:#000;letter-spacing:-0.098px;">[Java</span>
<span class="t" style="left:497.5px;top:724.0px;font-size:12px;color:#000;letter-spacing:0.131px;">应用程序]</span>
<span class="t" style="left:554.1px;top:724.0px;font-size:12px;color:#000;letter-spacing:0.464px;">D:\Program</span>
<span class="t" style="left:625.5px;top:724.0px;font-size:12px;color:#000;letter-spacing:0.480px;">Files\eclipse\plugins\org.eclipse.justj.openjdk.hotspot.</span>
<span class="t" style="left:938.0px;top:724.0px;font-size:12px;color:#000;letter-spacing:0.247px;">jre.full.win32.x86_64_17.0.4.v20220903-1038</span>
<span class="t" style="left:1191.5px;top:724.0px;font-size:12px;color:#000;letter-spacing:0.552px;">\jre\bin\javaw.exe</span>
<span class="t" style="left:1300.0px;top:724.0px;font-size:12px;color:#000;width:7px;overflow:hidden;">(2</span>
<span class="t" style="left:339.5px;top:743.5px;font-size:11.6px;color:#000;font-family:'Liberation Mono','Noto Sans CJK SC',monospace;letter-spacing:1.04px;">Hello World</span>
<span class="t" style="left:615.3px;top:904.5px;font-size:12px;color:#000;letter-spacing:-0.408px;">可写</span>
<span class="t" style="left:748.8px;top:904.5px;font-size:12px;color:#000;letter-spacing:0.171px;">智能插入</span>
<span class="t" style="left:877.5px;top:904.5px;font-size:12px;color:#000;letter-spacing:0.375px;">3 : 26 : 46</span>
<span class="t" style="left:1184.5px;top:913.0px;font-size:14px;color:rgba(118,118,118,.88);letter-spacing:-0.440px;text-shadow:0 0 1px #fff,0 0 1px #fff;">CSDN @2014Team</span>
</body></html>
